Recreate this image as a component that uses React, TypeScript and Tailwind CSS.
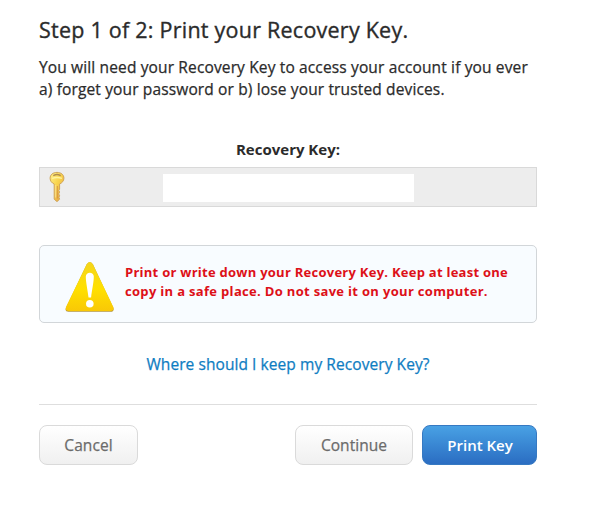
import type { ReactNode } from "react";

function KeyIcon() {
  return (
    <svg width="16" height="32" viewBox="0 0 16 32" aria-hidden="true">
      <defs>
        <linearGradient id="keyGold" x1="0" y1="0" x2="1" y2="1">
          <stop offset="0" stopColor="#fff08a" />
          <stop offset=".45" stopColor="#f8d34c" />
          <stop offset="1" stopColor="#e49a42" />
        </linearGradient>
      </defs>
      <path
        d="M8 1.4C3.9 1.4 1.1 3.8 1.1 7.2c0 2.7 1.6 4.7 4.1 5.8v15.2L8 30.6l2.6-2.4-.7-2 .7-1.5-.9-1.8.9-1.9-.8-1.4.8-1.3V13c2.5-1.1 4.3-3.1 4.3-5.8 0-3.4-2.8-5.8-6.9-5.8Z"
        fill="url(#keyGold)"
        stroke="#cfa45a"
        strokeWidth="1"
      />
      <path d="M4.8 4.4q3.2-1.8 6.4 0" fill="none" stroke="#b08c50" strokeWidth="1.4" strokeLinecap="round" />
      <path d="M3.1 7.4q4.9-1.7 9.8 0" fill="none" stroke="#fff3a0" strokeWidth="1.4" />
      <path d="M8.3 15v12.5" stroke="#cf8b3f" strokeWidth=".8" />
      <path d="M6.7 14v12.5" stroke="#fbe08a" strokeWidth="1" />
    </svg>
  );
}

function WarningIcon() {
  return (
    <svg width="50" height="52" viewBox="0 0 50 52" aria-hidden="true">
      <defs>
        <linearGradient id="warnYellow" x1="0" y1="0" x2="0" y2="1">
          <stop offset="0" stopColor="#f4d51c" />
          <stop offset=".55" stopColor="#ffe000" />
          <stop offset="1" stopColor="#f9c806" />
        </linearGradient>
      </defs>
      <path d="M21.6 3.6q3.2-4.6 6.4 0L48.3 46.8q1.2 4-2.8 4H3.6q-4 0-2.6-4Z" fill="#b5963a" />
      <path d="M21.6 3.4q3.2-4.6 6.4 0L48.3 46q1.2 3.9-2.8 3.9H3.6Q-.4 49.9 1 46Z" fill="url(#warnYellow)" />
      <path d="M20.8 15.6c0-5.3 8 -5.3 8 0 0 5.5-1.9 14.2-2.7 20.8h-2.6c-.8-6.6-2.7-15.3-2.7-20.8Z" fill="#fff" />
      <circle cx="24.8" cy="42.7" r="3.8" fill="#fff" />
    </svg>
  );
}

function Button({ className, children }: { className: string; children: ReactNode }) {
  return (
    <button className={`h-10 rounded-[8px] border leading-[37px] whitespace-nowrap ${className}`}>
      {children}
    </button>
  );
}

const plain =
  "border-[#dadada] bg-linear-to-b from-white to-[#f0f0f0] text-[15.5px] tracking-[0.06px] text-[#6b6b6b] [-webkit-text-stroke:0.25px_#6b6b6b]";

export default function App() {
  return (
    <main className="h-[510px] w-[600px] overflow-hidden bg-white pt-4 pl-[39px] font-['Open_Sans','Noto_Sans',sans-serif] text-[#2b2b2b]">
      <div className="w-[498px]">
        <h1 className="h-7 text-[21.5px] leading-7 font-normal tracking-[0.24px] whitespace-nowrap [-webkit-text-stroke:0.35px_#2b2b2b]">
          Step 1 of 2: Print your Recovery Key.
        </h1>
        <p className="mt-3 text-[15.5px] leading-[22px] tracking-[0.14px] whitespace-nowrap [-webkit-text-stroke:0.25px_#2b2b2b]">
          <span className="block">You will need your Recovery Key to access your account if you ever</span>
          <span className="block">a) forget your password or b) lose your trusted devices.</span>
        </p>
        <h2 className="mt-[38px] text-center text-[15px] leading-[22px] font-bold">Recovery Key:</h2>
        <div className="mt-[7px] flex h-10 items-center border border-[#d9d9d9] bg-[#ededed]">
          <div className="ml-[9px]">
            <KeyIcon />
          </div>
          <div className="mt-px ml-[98px] h-7 w-[251px] bg-white" />
        </div>
        <section className="mt-[38px] flex h-[78px] rounded-[5px] border border-[#d2d6d9] bg-[#f8fcff]">
          <div className="mt-[15px] ml-[25px] shrink-0">
            <WarningIcon />
          </div>
          <p className="mt-[17px] ml-[10px] text-[13px] leading-[19px] font-bold whitespace-nowrap text-[#dd1018]">
            <span className="block tracking-[0.26px]">Print or write down your Recovery Key. Keep at least one</span>
            <span className="block tracking-[0.32px]">copy in a safe place. Do not save it on your computer.</span>
          </p>
        </section>
        <p className="mt-[30px] text-center text-[15.5px] leading-[22px] tracking-[0.07px] whitespace-nowrap text-[#0f7dc2] [-webkit-text-stroke:0.25px_#0f7dc2]">
          <a>Where should I keep my Recovery Key?</a>
        </p>
        <hr className="mt-[29px] border-[#dedede]" />
        <div className="mt-5 flex">
          <Button className={`w-[99px] ${plain}`}>Cancel</Button>
          <Button className={`ml-auto w-[118px] ${plain}`}>Continue</Button>
          <Button className="ml-[9px] w-[115px] border-[#3679c2] bg-linear-to-b from-[#49a1e4] to-[#2b6dc2] pl-px text-[15px] font-semibold text-white">
            Print Key
          </Button>
        </div>
      </div>
    </main>
  );
}
